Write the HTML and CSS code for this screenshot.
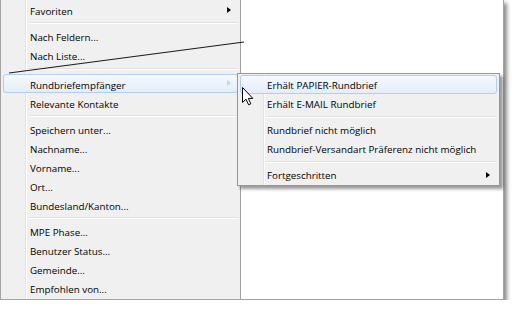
FILE: index.html
```html
<!DOCTYPE html>
<html lang="de">
<head>
    <meta charset="UTF-8">
    <title>Rundbriefempfänger</title>
    <link rel="stylesheet" href="styles.css">
</head>
<body>
    <div class="shot">
        <ul class="menu main-menu">
            <li class="item has-sub">Favoriten</li>
            <li class="sep"></li>
            <li class="item">Nach Feldern...</li>
            <li class="item">Nach Liste...</li>
            <li class="sep sep-wide"></li>
            <li class="item has-sub active muted-arrow">Rundbriefempfänger</li>
            <li class="item">Relevante Kontakte</li>
            <li class="sep"></li>
            <li class="item">Speichern unter...</li>
            <li class="item">Nachname...</li>
            <li class="item">Vorname...</li>
            <li class="item">Ort...</li>
            <li class="item">Bundesland/Kanton...</li>
            <li class="sep"></li>
            <li class="item">MPE Phase...</li>
            <li class="item">Benutzer Status...</li>
            <li class="item">Gemeinde...</li>
            <li class="item">Empfohlen von...</li>
        </ul>

        <!-- popup submenu -->
        <ul class="menu sub-menu">
            <li class="item active">Erhält PAPIER-Rundbrief</li>
            <li class="item">Erhält E-MAIL Rundbrief</li>
            <li class="sep"></li>
            <li class="item">Rundbrief nicht möglich</li>
            <li class="item">Rundbrief-Versandart Präferenz nicht möglich</li>
            <li class="sep"></li>
            <li class="item has-sub">Fortgeschritten</li>
        </ul>

        <svg class="stroke" width="260" height="90" viewBox="0 0 260 90">
            <line x1="8" y1="73" x2="243" y2="42" stroke="#1c1c1c" stroke-width="1.2"/>
        </svg>

        <svg class="cursor" width="13" height="19" viewBox="0 0 13 19">
            <path d="M0.5 0.5 L0.5 15.5 L4 12.2 L6.6 17.8 L8.8 16.8 L6.3 11.4 L10.8 11.4 Z" fill="#fff" stroke="#000" stroke-width="1" stroke-linejoin="miter"/>
        </svg>
    </div>
</body>
</html>
```

FILE: styles.css
```css
body {
    margin: 0;
    background-color: #fff;
    font-family: "Open Sans", "Noto Sans", sans-serif;
    font-size: 9.8px;
    color: #000;
    overflow: hidden;
}

.shot {
    position: relative;
    width: 502px;
    height: 299px;
    background-color: #fff;
    border: 1px solid #a3a3a3;
    border-top: none;
    box-shadow: 3px 3px 4px rgba(0, 0, 0, 0.45);
}

.menu {
    list-style: none;
    margin: 0;
    background-color: #f0f0f0;
}

.main-menu {
    width: 240px;
    height: 299px;
    padding: 0 2px;
    box-sizing: border-box;
    border-right: 1px solid #a0a0a0;
    background-image: linear-gradient(to right, transparent 24px, #e2e3e3 24px, #e2e3e3 25px, #fff 25px, #fff 26px, transparent 26px);
}

.sub-menu {
    position: absolute;
    left: 236px;
    top: 73px;
    width: 257px;
    padding: 1px 2px;
    border: 1px solid #979797;
    background-image: linear-gradient(to right, transparent 25px, #e2e3e3 25px, #e2e3e3 26px, #fff 26px, #fff 27px, transparent 27px);
    box-shadow: 3px 3px 3px rgba(0, 0, 0, 0.4);
}

.item {
    position: relative;
    height: 19px;
    line-height: 15px;
    padding: 4px 0 0 27px;
    white-space: nowrap;
    box-sizing: border-box;
}

.item.active {
    border: 1px solid #b3cdee;
    border-radius: 3px;
    padding: 3px 0 0 26px;
    background-image: linear-gradient(#f6f9fe, #e4edf9);
}

.sub-menu .item {
    line-height: 17px;
    padding-top: 2px;
}

.sub-menu .item.active {
    line-height: 17px;
    padding-top: 1px;
}

.has-sub::after {
    content: "";
    position: absolute;
    right: 7px;
    top: 7px;
    border-left: 4px solid #000;
    border-top: 3.5px solid transparent;
    border-bottom: 3.5px solid transparent;
}

.active.has-sub::after {
    top: 5px;
    right: 6px;
}

.muted-arrow::after {
    border-left-color: #c9d6e6;
}

.sep {
    height: 7px;
    position: relative;
}

.sep::before {
    content: "";
    position: absolute;
    left: 26px;
    right: 0;
    top: 3px;
    border-top: 1px solid #e0e0e0;
    border-bottom: 1px solid #fff;
}

.sep-wide {
    height: 10px;
}

.sep-wide::before {
    top: 4px;
}

.stroke {
    position: absolute;
    left: 0;
    top: 0;
}

.cursor {
    position: absolute;
    left: 241px;
    top: 87px;
}
```
